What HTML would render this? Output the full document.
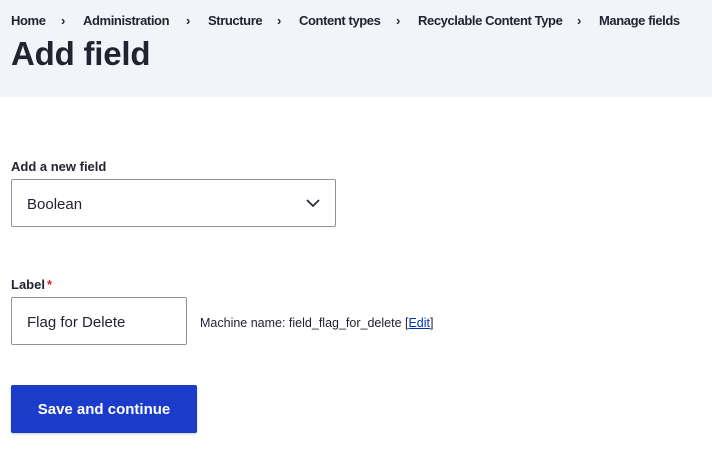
<!DOCTYPE html>
<html><head><style>
body{margin:0;width:712px;height:452px;background:#fff;font-family:"Liberation Sans",sans-serif;color:#222330;position:relative;overflow:hidden}
.hdr{position:absolute;left:0;top:0;width:712px;height:97px;background:#f3f4f9}
.bc{position:absolute;top:13px;font-size:13px;font-weight:bold;white-space:nowrap;letter-spacing:-0.4px}
.sep{position:absolute;top:13px;font-size:13px;font-weight:bold}
h1{position:absolute;left:11px;top:35px;margin:0;font-size:33px;font-weight:bold;letter-spacing:-0.2px}
.lbl{position:absolute;left:11px;font-size:13px;font-weight:bold}
.box{position:absolute;border:1px solid #8e929c;border-radius:2px;box-sizing:border-box;font-size:15px;padding-left:15px;line-height:49px}
.btn{position:absolute;left:11px;top:385px;width:186px;height:48px;background:#1b3bcb;border-radius:2px;color:#fff;font-weight:bold;font-size:15px;text-align:center;line-height:50px;box-shadow:0 1px 2px rgba(0,0,0,.2)}
</style></head><body>
<div class="hdr"></div>
<div class="bc" style="left:11px">Home</div><div class="sep" style="left:61px">›</div>
<div class="bc" style="left:83px">Administration</div><div class="sep" style="left:186px">›</div>
<div class="bc" style="left:208px">Structure</div><div class="sep" style="left:277px">›</div>
<div class="bc" style="left:299px">Content types</div><div class="sep" style="left:396px">›</div>
<div class="bc" style="left:418px">Recyclable Content Type</div><div class="sep" style="left:577px">›</div>
<div class="bc" style="left:599px">Manage fields</div>
<h1>Add field</h1>
<div class="lbl" style="top:159px">Add a new field</div>
<div class="box" style="left:11px;top:179px;width:325px;height:48px">Boolean
<svg style="position:absolute;right:14px;top:17px" width="16" height="12" viewBox="0 0 16 12"><path d="M2 3l6 6 6-6" fill="none" stroke="#222330" stroke-width="1.6"/></svg></div>
<div class="lbl" style="top:277px">Label<span style="color:#d72222;margin-left:2px">*</span></div>
<div class="box" style="left:11px;top:297px;width:176px;height:48px">Flag for Delete</div>
<div style="position:absolute;left:200px;top:316px;font-size:12.5px">Machine name: field_flag_for_delete [<span style="color:#0036b1;text-decoration:underline">Edit</span>]</div>
<div class="btn">Save and continue</div>
</body></html>
